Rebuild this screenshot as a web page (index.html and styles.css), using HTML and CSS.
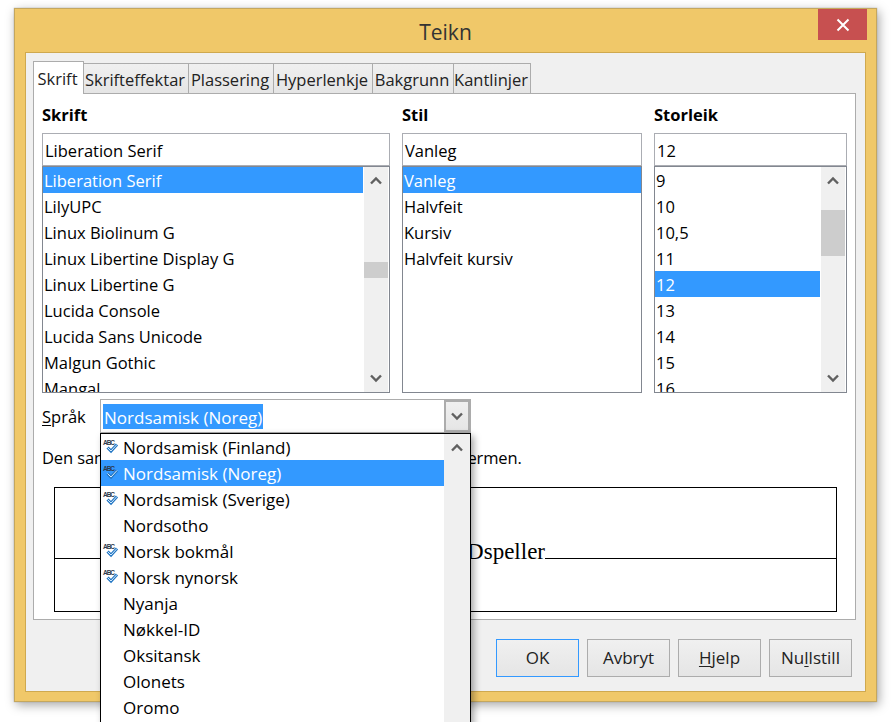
FILE: index.html
```html
<!DOCTYPE html>
<html lang="nn">
<head>
  <meta charset="UTF-8">
  <title>Teikn</title>
  <link rel="stylesheet" href="styles.css">
</head>
<body>
  <svg class="defs" width="0" height="0">
    <symbol id="up" viewBox="0 0 12 9"><path d="M1 7.5 6 2.5l5 5" fill="none" stroke="#606060" stroke-width="2.4"/></symbol>
    <symbol id="down" viewBox="0 0 12 9"><path d="M1 1.5 6 6.5l5-5" fill="none" stroke="#606060" stroke-width="2.4"/></symbol>
    <symbol id="abc" viewBox="0 0 17 16">
      <path d="M5.5 8.5 9 12 15 5.5" fill="none" stroke="#2477c4" stroke-width="3"/>
      <path d="M5.5 8.5 9 12 15 5.5" fill="none" stroke="#d5ebfc" stroke-width="1"/>
      <text x="1" y="6" font-family="Liberation Sans" font-size="6.5" font-weight="700" textLength="12" fill="#2c3a4c">ABC</text>
    </symbol>
  </svg>

  <div class="window">
    <div class="titlebar">
      <span class="title">Teikn</span>
      <div class="close">
        <svg width="14" height="14" viewBox="0 0 14 14"><path d="M1.5 1.5l11 11M12.5 1.5l-11 11" stroke="#fff" stroke-width="2"/></svg>
      </div>
    </div>

    <div class="client">
      <div class="tabs">
        <div class="tab active t1">Skrift</div>
        <div class="tab t2">Skrifteffektar</div>
        <div class="tab t3">Plassering</div>
        <div class="tab t4">Hyperlenkje</div>
        <div class="tab t5">Bakgrunn</div>
        <div class="tab t6">Kantlinjer</div>
      </div>

      <div class="panel">
        <div class="columns">
          <div class="col">
            <div class="col-label">Skrift</div>
            <div class="field">Liberation Serif</div>
            <div class="list">
              <div class="rows">
                <div class="row sel">Liberation Serif</div>
                <div class="row">LilyUPC</div>
                <div class="row">Linux Biolinum G</div>
                <div class="row">Linux Libertine Display G</div>
                <div class="row">Linux Libertine G</div>
                <div class="row">Lucida Console</div>
                <div class="row">Lucida Sans Unicode</div>
                <div class="row">Malgun Gothic</div>
                <div class="row">Mangal</div>
              </div>
              <div class="scrollbar">
                <svg class="arrow"><use href="#up"/></svg>
                <div class="track"><div class="thumb thumb-font"></div></div>
                <svg class="arrow"><use href="#down"/></svg>
              </div>
            </div>
          </div>

          <div class="col">
            <div class="col-label">Stil</div>
            <div class="field">Vanleg</div>
            <div class="list">
              <div class="rows">
                <div class="row sel">Vanleg</div>
                <div class="row">Halvfeit</div>
                <div class="row">Kursiv</div>
                <div class="row">Halvfeit kursiv</div>
              </div>
            </div>
          </div>

          <div class="col">
            <div class="col-label">Storleik</div>
            <div class="field">12</div>
            <div class="list">
              <div class="rows">
                <div class="row">9</div>
                <div class="row">10</div>
                <div class="row">10,5</div>
                <div class="row">11</div>
                <div class="row sel">12</div>
                <div class="row">13</div>
                <div class="row">14</div>
                <div class="row">15</div>
                <div class="row">16</div>
              </div>
              <div class="scrollbar">
                <svg class="arrow"><use href="#up"/></svg>
                <div class="track"><div class="thumb thumb-size"></div></div>
                <svg class="arrow"><use href="#down"/></svg>
              </div>
            </div>
          </div>
        </div>

        <div class="lang-row">
          <span class="lang-label"><u>S</u>pråk</span>
          <div class="combo">
            <span class="combo-text">Nordsamisk (Noreg)</span>
            <div class="combo-btn"><svg class="arrow"><use href="#down"/></svg></div>

            <div class="dropdown">
              <div class="drop-rows">
                <div class="drop-row"><svg class="abc"><use href="#abc"/></svg>Nordsamisk (Finland)</div>
                <div class="drop-row sel"><svg class="abc"><use href="#abc"/></svg>Nordsamisk (Noreg)</div>
                <div class="drop-row"><svg class="abc"><use href="#abc"/></svg>Nordsamisk (Sverige)</div>
                <div class="drop-row"><span class="abc"></span>Nordsotho</div>
                <div class="drop-row"><svg class="abc"><use href="#abc"/></svg>Norsk bokmål</div>
                <div class="drop-row"><svg class="abc"><use href="#abc"/></svg>Norsk nynorsk</div>
                <div class="drop-row"><span class="abc"></span>Nyanja</div>
                <div class="drop-row"><span class="abc"></span>Nøkkel-ID</div>
                <div class="drop-row"><span class="abc"></span>Oksitansk</div>
                <div class="drop-row"><span class="abc"></span>Olonets</div>
                <div class="drop-row"><span class="abc"></span>Oromo</div>
              </div>
              <div class="scrollbar drop-bar">
                <svg class="arrow"><use href="#up"/></svg>
              </div>
            </div>
          </div>
        </div>

        <div class="note">Den same skrifta vil bli brukt både på skrivaren og på skjermen.</div>

        <div class="preview">
          <div class="preview-top">
            <div class="rule rule-left"></div>
            <span class="sample">Dspeller</span>
            <div class="rule rule-right"></div>
          </div>
        </div>
      </div>

      <div class="buttons">
        <div class="btn default">OK</div>
        <div class="btn">Avbryt</div>
        <div class="btn"><u>H</u>jelp</div>
        <div class="btn">Nu<u>l</u>lstill</div>
      </div>
    </div>
  </div>
</body>
</html>
```

FILE: styles.css
```css
html, body {
  height: 722px;
  margin: 0;
  overflow: hidden;
}
body {
  background: #fff;
  color: #000;
  font-family: "Open Sans", sans-serif;
  font-size: 16.5px;
}
.defs {
  position: absolute;
}
u {
  text-underline-offset: 2px;
}

.window {
  box-sizing: border-box;
  width: 863px;
  height: 694px;
  margin: 8px 0 0 14px;
  padding: 0 10px;
  background: #f0c869;
  border: 1px solid #c4a75e;
  box-shadow: 0 0 1px #999, 2px 3px 10px rgba(0, 0, 0, 0.35);
  position: relative;
}
.titlebar {
  height: 43px;
  display: flex;
  align-items: center;
  justify-content: center;
}
.title {
  font-size: 21px;
  color: #333;
  margin-top: 3px;
}
.close {
  position: absolute;
  top: 0;
  right: 9px;
  width: 49px;
  height: 31px;
  background: #c75050;
  display: flex;
  align-items: center;
  justify-content: center;
}

.client {
  box-sizing: border-box;
  height: 640px;
  padding: 8px 9px 0 7px;
  background: #f0f0f0;
  border: 1px solid #cfa94f;
}

.tabs {
  display: flex;
  align-items: flex-end;
  height: 33px;
  position: relative;
  z-index: 1;
  margin-bottom: -1px;
}
.tab {
  box-sizing: border-box;
  height: 31px;
  line-height: 32px;
  padding-right: 2px;
  text-align: center;
  white-space: nowrap;
  color: #222;
  background: linear-gradient(#f0f0f0, #e5e5e5);
  border: 1px solid #acacac;
  margin-left: -1px;
}
.tab.active {
  height: 33px;
  margin-left: 0;
  background: #fff;
  border-bottom: none;
  line-height: 33px;
  position: relative;
  z-index: 1;
}
.t1 { width: 51px; }
.t2 { width: 106px; }
.t3 { width: 86px; }
.t4 { width: 100px; }
.t5 { width: 82px; }
.t6 { width: 78px; }

.panel {
  box-sizing: border-box;
  height: 527px;
  padding: 10px 8px 0;
  background: #fff;
  border: 1px solid #acacac;
}
.columns {
  display: grid;
  grid-template-columns: 348px 240px 193px;
  column-gap: 12px;
}
.col-label {
  height: 22px;
  line-height: 22px;
  margin-bottom: 7px;
  font-weight: 700;
}
.field {
  box-sizing: border-box;
  height: 33px;
  line-height: 33px;
  padding-left: 2px;
  border: 1px solid #abadb3;
}
.list {
  box-sizing: border-box;
  height: 227px;
  display: flex;
  border: 1px solid #828790;
  background: #fff;
  overflow: hidden;
}
.rows {
  flex: 1;
  min-width: 0;
  overflow: hidden;
}
.row {
  height: 26px;
  line-height: 28px;
  padding-left: 1px;
  white-space: nowrap;
}
.sel {
  background: #3399ff;
  color: #fff;
}

.scrollbar {
  width: 24px;
  margin: 0 1px;
  display: flex;
  flex-direction: column;
  align-items: center;
  flex: none;
  background: #f0f0f0;
}
.arrow {
  width: 12px;
  height: 9px;
  flex: none;
  margin: 9px 0;
}
.track {
  flex: 1;
  align-self: stretch;
}
.thumb {
  background: #cdcdcd;
}
.thumb-font {
  height: 16px;
  margin-top: 68px;
}
.thumb-size {
  height: 46px;
  margin-top: 16px;
}

.lang-row {
  display: flex;
  align-items: center;
  margin-top: 6px;
  height: 34px;
}
.lang-label {
  width: 58px;
}
.combo {
  box-sizing: border-box;
  width: 371px;
  height: 34px;
  display: flex;
  align-items: center;
  padding-left: 2px;
  border: 1px solid #acacac;
  position: relative;
  z-index: 2;
}
.combo-text {
  flex: none;
  height: 25px;
  line-height: 27px;
  padding: 0 1px;
  background: #3399ff;
  color: #fff;
  font-size: 17px;
}
.combo-btn {
  box-sizing: border-box;
  position: absolute;
  top: 0;
  right: 0;
  width: 26px;
  height: 32px;
  display: flex;
  align-items: center;
  justify-content: center;
  background: linear-gradient(#f0f0f0, #e5e5e5);
  border: 2px solid #acacac;
}
.dropdown {
  box-sizing: border-box;
  position: absolute;
  top: 33px;
  left: -1px;
  width: 371px;
  height: 300px;
  display: flex;
  background: #fff;
  border: 1px solid #000;
  box-shadow: 3px 3px 7px rgba(0, 0, 0, 0.35);
}
.drop-rows {
  width: 343px;
  flex: none;
}
.drop-row {
  height: 26px;
  line-height: 28px;
  display: flex;
  white-space: nowrap;
  font-size: 17px;
}
.abc {
  width: 17px;
  height: 16px;
  margin: 5px 4px 0 1px;
  flex: none;
}
.drop-bar {
  flex: 1;
  margin: 0;
}

.note {
  margin-top: 14px;
  height: 22px;
  line-height: 22px;
  white-space: nowrap;
  letter-spacing: -0.12px;
}

.preview {
  box-sizing: border-box;
  width: 783px;
  height: 125px;
  margin: 18px 0 0 12px;
  border: 1px solid #000;
}
.preview-top {
  display: flex;
  align-items: flex-end;
  height: 71px;
}
.rule {
  height: 1px;
  background: #000;
}
.rule-left {
  flex: 1;
}
.rule-right {
  width: 291px;
  flex: none;
}
.sample {
  font-family: "Liberation Serif", serif;
  font-size: 23px;
  line-height: 26px;
  margin-bottom: -6px;
  flex: none;
}

.buttons {
  display: flex;
  justify-content: flex-end;
  gap: 8px;
  margin: 19px 4px 0 0;
}
.btn {
  box-sizing: border-box;
  width: 83px;
  height: 38px;
  line-height: 36px;
  text-align: center;
  color: #222;
  background: linear-gradient(#f0f0f0, #e5e5e5);
  border: 1px solid #acacac;
  font-size: 17px;
}
.btn.default {
  border-color: #3399ff;
}
```
